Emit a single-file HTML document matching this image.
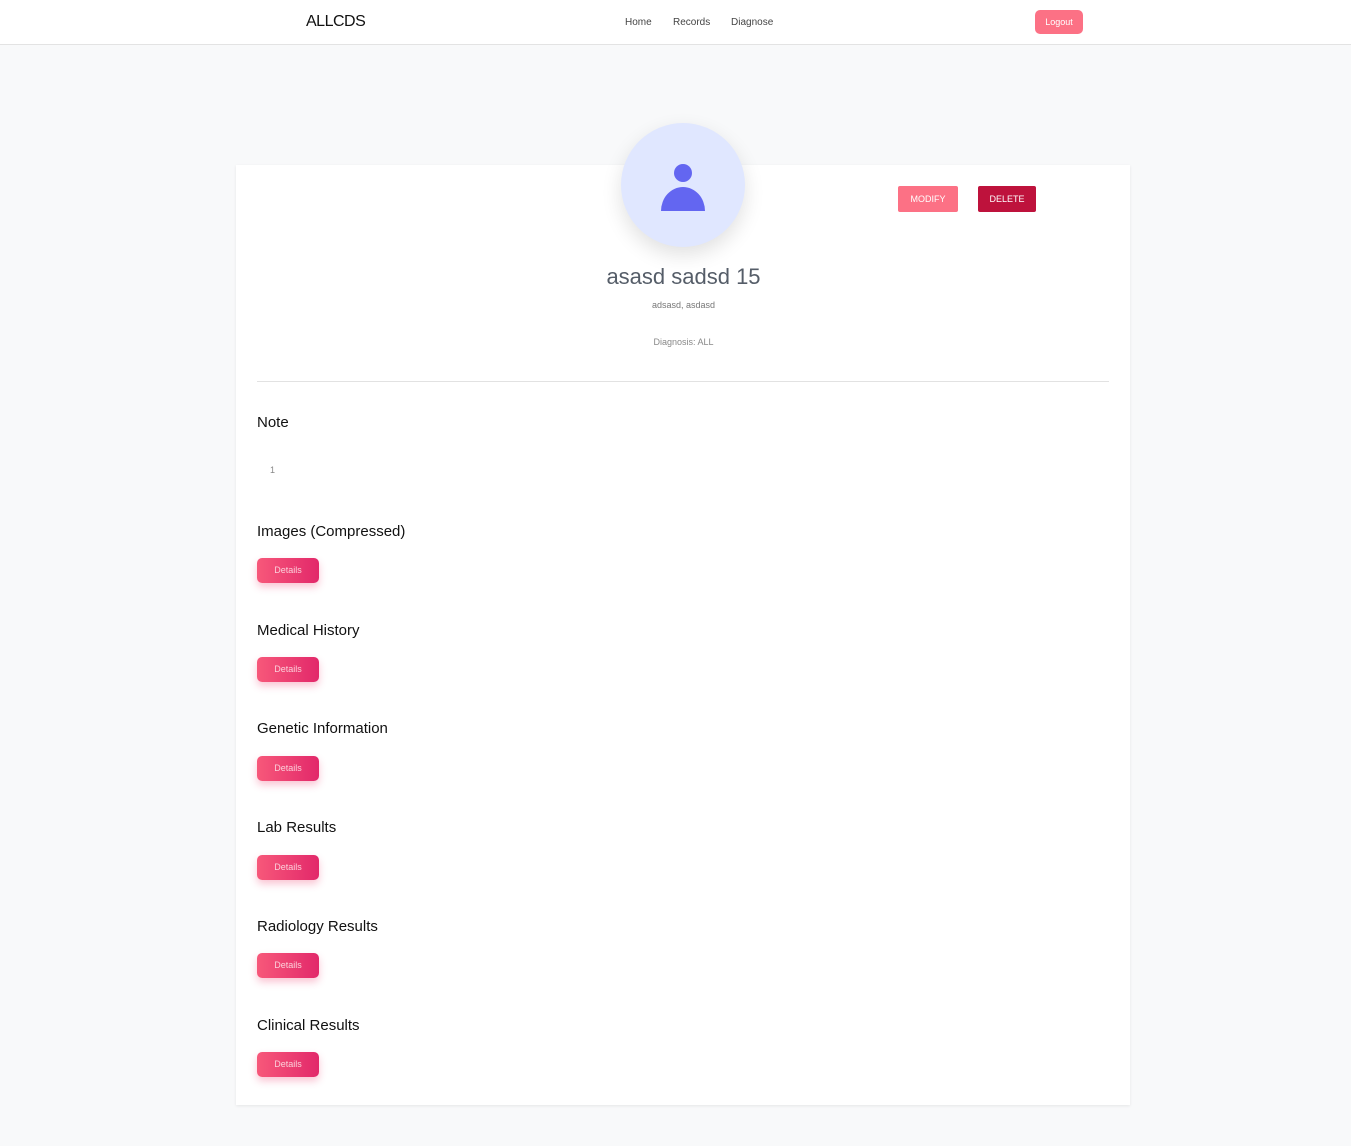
<!DOCTYPE html>
<html><head><style>
*{margin:0;padding:0;box-sizing:border-box}
body{width:1351px;height:1146px;background:#f8f9fa;font-family:"Liberation Sans",sans-serif;position:relative;overflow:hidden}
.nav{position:absolute;left:0;top:0;width:1351px;height:45px;background:#fff;border-bottom:1px solid #e3e3e3}
.logo{position:absolute;left:306px;top:13px;font-size:16px;color:#111;letter-spacing:-0.5px}
.links{position:absolute;top:17px;font-size:10px;color:#444}
.logout{position:absolute;left:1035px;top:10px;width:48px;height:24px;background:#fc7185;border-radius:5px;color:#fff;font-size:9px;text-align:center;line-height:24px}
.card{position:absolute;left:236px;top:165px;width:894px;height:940px;background:#fff;box-shadow:0 1px 3px rgba(0,0,0,.08)}
.av{position:absolute;left:621px;top:123px;width:124px;height:124px;border-radius:50%;background:#e0e7ff;box-shadow:0 8px 20px rgba(0,0,0,.12)}
.btn{position:absolute;height:26px;color:#fff;font-size:9px;text-align:center;line-height:26px;border-radius:2px}
.c{position:absolute;left:8px;width:1351px;text-align:center;color:#777}
.h{position:absolute;left:257px;font-size:15px;color:#111}
.d{position:absolute;left:257px;width:62px;height:25px;border-radius:5px;background:linear-gradient(90deg,#f7587a,#e2286a);color:#fbd0da;font-size:9px;text-align:center;line-height:25px;box-shadow:0 4px 8px rgba(240,60,110,.3)}
</style></head><body>
<div class="nav">
<div class="logo">ALLCDS</div>
<div class="links" style="left:625px">Home</div>
<div class="links" style="left:673px">Records</div>
<div class="links" style="left:731px">Diagnose</div>
<div class="logout">Logout</div>
</div>
<div class="card"></div>
<div class="av"><svg width="124" height="124"><circle cx="62" cy="50" r="9" fill="#6366f1"/><path d="M40 88 A22 24 0 0 1 84 88 Z" fill="#6366f1"/></svg></div>
<div class="btn" style="left:898px;top:186px;width:60px;background:#fc7185">MODIFY</div>
<div class="btn" style="left:978px;top:186px;width:58px;background:#be123c">DELETE</div>
<div class="c" style="top:264px;font-size:22px;color:#555d68">asasd sadsd 15</div>
<div class="c" style="top:300px;font-size:9px">adsasd, asdasd</div>
<div class="c" style="top:337px;font-size:9px;color:#888">Diagnosis: ALL</div>
<div style="position:absolute;left:257px;top:381px;width:852px;height:1px;background:#e2e2e2"></div>
<div class="h" style="top:414px">Note</div>
<div style="position:absolute;left:270px;top:465px;font-size:9px;color:#888">1</div>
<div class="h" style="top:523px">Images (Compressed)</div><div class="d" style="top:558px">Details</div>
<div class="h" style="top:622px">Medical History</div><div class="d" style="top:657px">Details</div>
<div class="h" style="top:720px">Genetic Information</div><div class="d" style="top:756px">Details</div>
<div class="h" style="top:819px">Lab Results</div><div class="d" style="top:855px">Details</div>
<div class="h" style="top:918px">Radiology Results</div><div class="d" style="top:953px">Details</div>
<div class="h" style="top:1017px">Clinical Results</div><div class="d" style="top:1052px">Details</div>
</body></html>
